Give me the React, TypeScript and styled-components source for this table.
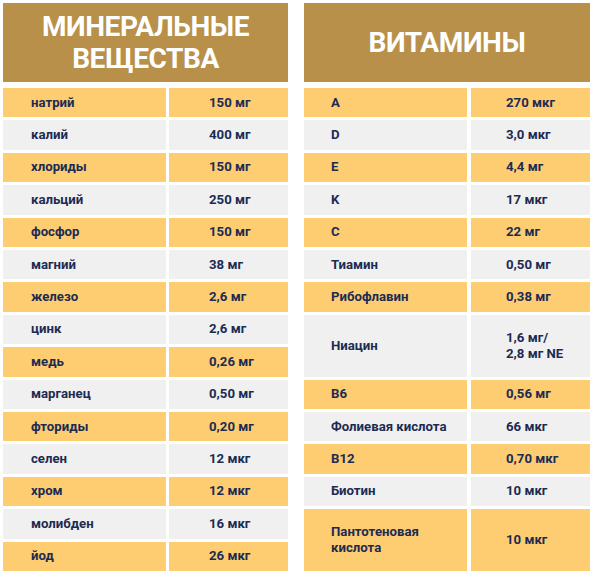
import React from 'react'
import styled, { createGlobalStyle } from 'styled-components'

interface Row {
    name: string,
    value: string,
    tall?: boolean
}

const minerals: Row[] = [
    { name: 'натрий', value: '150 мг' },
    { name: 'калий', value: '400 мг' },
    { name: 'хлориды', value: '150 мг' },
    { name: 'кальций', value: '250 мг' },
    { name: 'фосфор', value: '150 мг' },
    { name: 'магний', value: '38 мг' },
    { name: 'железо', value: '2,6 мг' },
    { name: 'цинк', value: '2,6 мг' },
    { name: 'медь', value: '0,26 мг' },
    { name: 'марганец', value: '0,50 мг' },
    { name: 'фториды', value: '0,20 мг' },
    { name: 'селен', value: '12 мкг' },
    { name: 'хром', value: '12 мкг' },
    { name: 'молибден', value: '16 мкг' },
    { name: 'йод', value: '26 мкг' },
]

const vitamins: Row[] = [
    { name: 'A', value: '270 мкг' },
    { name: 'D', value: '3,0 мкг' },
    { name: 'E', value: '4,4 мг' },
    { name: 'K', value: '17 мкг' },
    { name: 'C', value: '22 мг' },
    { name: 'Тиамин', value: '0,50 мг' },
    { name: 'Рибофлавин', value: '0,38 мг' },
    { name: 'Ниацин', value: '1,6 мг/\n2,8 мг NE', tall: true },
    { name: 'B6', value: '0,56 мг' },
    { name: 'Фолиевая кислота', value: '66 мкг' },
    { name: 'B12', value: '0,70 мкг' },
    { name: 'Биотин', value: '10 мкг' },
    { name: 'Пантотеновая\nкислота', value: '10 мкг', tall: true },
]

const GlobalStyle = createGlobalStyle`
    body {
        margin: 0;
        background: #ffffff;
        font-family: Roboto, "Liberation Sans", sans-serif;
    }
`

const Page = styled.div`
    display: grid;
    grid-template-columns: 285px 286px;
    column-gap: 16px;
    padding: 3px 2px 0 3px;
    width: 592px;
    box-sizing: border-box;
`

const Table = styled.section`
    display: flex;
    flex-direction: column;
    gap: 6px;
`

const Header = styled.h2`
    margin: 0;
    height: 79px;
    background: #b8904a;
    color: #ffffff;
    display: flex;
    align-items: center;
    justify-content: center;
    text-align: center;
    white-space: pre-line;
    font-size: 28px;
    line-height: 32px;
    font-weight: bold;
    letter-spacing: -0.4px;
`

const Body = styled.div`
    display: grid;
    grid-template-rows: repeat(15, 1fr);
    row-gap: 3px;
    height: 483px;
`

const RowLine = styled.div<{ $tall?: boolean, $gap: number }>`
    display: grid;
    grid-template-columns: 163px 1fr;
    column-gap: ${p => p.$gap}px;
    grid-row: ${p => p.$tall ? 'span 2' : 'span 1'};
`

const Cell = styled.div<{ $odd: boolean, $pad: number }>`
    background: ${p => p.$odd ? '#fecd72' : '#f0f0f0'};
    color: #1c2b52;
    font-size: 13.2px;
    font-weight: bold;
    line-height: 16px;
    display: flex;
    align-items: center;
    padding-left: ${p => p.$pad}px;
    white-space: pre-line;
`

interface TableProps {
    title: string,
    rows: Row[],
    labelPad: number,
    valuePad: number,
    gap: number
}

const NutrientTable: React.FC<TableProps> = ({ title, rows, labelPad, valuePad, gap }) => {
    return (
        <Table>
            <Header>{title}</Header>
            <Body>
                {rows.map((r, i) => (
                    <RowLine key={r.name} $tall={r.tall} $gap={gap}>
                        <Cell $odd={i % 2 === 0} $pad={labelPad}>{r.name}</Cell>
                        <Cell $odd={i % 2 === 0} $pad={valuePad}>{r.value}</Cell>
                    </RowLine>
                ))}
            </Body>
        </Table>
    )
}

const App: React.FC = () => {
    return (
        <>
            <GlobalStyle />
            <Page>
                <NutrientTable title={'МИНЕРАЛЬНЫЕ\nВЕЩЕСТВА'} rows={minerals} labelPad={28} valuePad={40} gap={3} />
                <NutrientTable title='ВИТАМИНЫ' rows={vitamins} labelPad={27} valuePad={35} gap={4} />
            </Page>
        </>
    )
}

export default App
